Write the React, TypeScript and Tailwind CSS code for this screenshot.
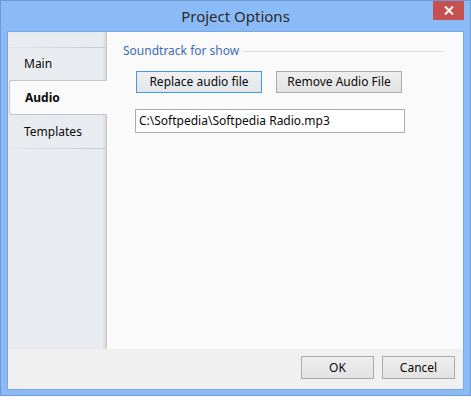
export default function App() {
  return (
    <div className="w-[471px] h-[405px] bg-white" style={{ fontFamily: "'Noto Sans', 'Open Sans', sans-serif" }}>
      <div className="w-[471px] h-[396px] border border-[#6f9bd4] bg-[#8abbf6] flex flex-col">
        {/* title bar */}
        <div className="h-[30px] flex items-start relative">
          <div className="flex-1 text-center text-[15px] leading-[30px] text-[#2b2b2b]">Project Options</div>
          <div className="absolute right-[6px] top-0 w-[31px] h-[19px] bg-[#c75050] flex items-center justify-center">
            <svg width="10" height="9" viewBox="0 0 10 9">
              <path d="M1 0.5 L9 8.5 M9 0.5 L1 8.5" stroke="#fff" strokeWidth="2" />
            </svg>
          </div>
        </div>

        {/* client */}
        <div className="mx-[6px] h-[359px] border border-[#7aa7e2] bg-[#f0f0f0] flex flex-col text-[12px] text-[#0a0a0a]">
          <div className="h-[317px] flex">
            {/* sidebar */}
            <div className="w-[99px] h-full bg-[#e8ebef] border-r border-[#c4c7cc] shadow-[inset_-3px_0_3px_-1px_rgba(0,0,0,0.08)] flex flex-col pt-[15px]">
              <div className="h-px bg-gradient-to-r from-[#e2e5e9] to-[#c6c9ce]" />
              <div className="h-[32px] flex items-center pl-[16px]">Main</div>
              <div className="h-[35px] -mr-px ml-px flex items-center pl-[15px] bg-[#fafafa] border border-r-0 border-[#c3c6cb] rounded-l-[3px] font-bold">
                Audio
              </div>
              <div className="h-[33px] flex items-center pl-[16px]">Templates</div>
              <div className="h-px bg-gradient-to-r from-[#e2e5e9] to-[#c6c9ce]" />
            </div>

            {/* content */}
            <div className="flex-1 bg-[#fafafa] pt-[10px] pl-[16px] pr-[19px]">
              <div className="flex items-center gap-[5px] h-[18px]">
                <span className="text-[#3c6db6]">Soundtrack for show</span>
                <div className="flex-1 h-px bg-[#d6dce4]" />
              </div>
              <div className="flex gap-[14px] mt-[11px] ml-[13px]">
                <button className="w-[126px] h-[22px] border border-[#3c9cf1] bg-gradient-to-b from-[#eef0f2] to-[#e3e6e9] text-[12px]">
                  Replace audio file
                </button>
                <button className="w-[126px] h-[22px] border border-[#acacac] bg-gradient-to-b from-[#eeeeee] to-[#e2e2e2] text-[12px]">
                  Remove Audio File
                </button>
              </div>
              <div className="mt-[16px] ml-[12px] w-[270px] h-[24px] border border-[#abadb3] bg-white flex items-center pl-[3px]">
                C:\Softpedia\Softpedia Radio.mp3
              </div>
            </div>
          </div>

          {/* bottom bar */}
          <div className="flex-1 bg-[#f0f0f0] flex justify-end items-start pt-[7px] pr-[8px] gap-[8px]">
            <button className="w-[73px] h-[23px] border border-[#acacac] bg-gradient-to-b from-[#eeeeee] to-[#e2e2e2] text-[12px]">
              OK
            </button>
            <button className="w-[73px] h-[23px] border border-[#acacac] bg-gradient-to-b from-[#eeeeee] to-[#e2e2e2] text-[12px]">
              Cancel
            </button>
          </div>
        </div>
      </div>
    </div>
  );
}
